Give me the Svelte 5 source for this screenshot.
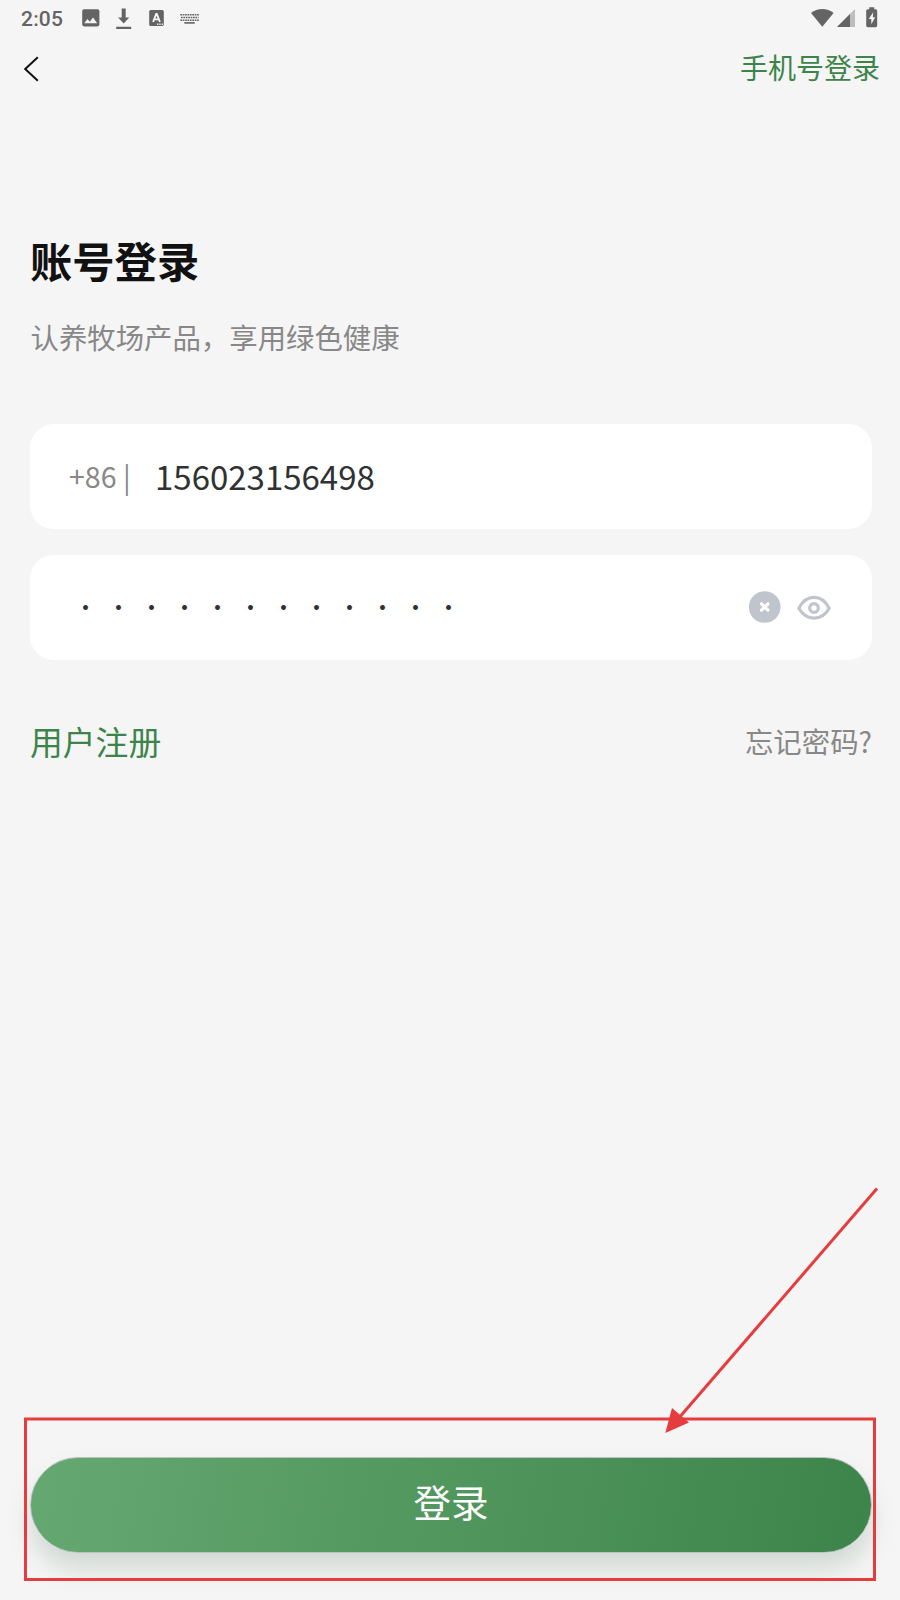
<script>
    let phone = "156023156498";
    let passwordLength = 12;
</script>

<div class="page">
    <!-- Status bar -->
    <div class="status-bar">
        <span class="time">2:05</span>
        <svg class="picture" width="18" height="18" viewBox="0 0 18 18">
            <path fill="#646464" fill-rule="evenodd" d="M2 .2h13.6a1.8 1.8 0 0 1 1.8 1.8v13.6a1.8 1.8 0 0 1-1.8 1.8H2A1.8 1.8 0 0 1 .2 15.600V2A1.8 1.8 0 0 1 2 .2zM2.200 14.200h13L11 8.600l-3.200 4.200-2.300-2.700z" />
        </svg>
        <svg class="download" width="16" height="22" viewBox="0 0 16 22">
            <path fill="#646464" d="M5.700.500h4v9h3.600L7.700 15.500 2.100 9.500h3.600zM.200 18.700h15v2.200H.200z" />
        </svg>
        <svg class="letter" width="16" height="18" viewBox="0 0 16 18">
            <rect x=".2" y="1" width="14.600" height="16" rx="1.600" fill="#646464" />
            <path fill="none" stroke="#f5f5f5" stroke-width="1.900" d="M4.100 13L7.200 5h.6l3.100 8M5.300 10.400h4.400" />
            <path fill="#f5f5f5" d="M8 14.600h1.300v1.300H8zM10.300 14.600h1.300v1.300h-1.300zM12.600 14.600h1.300v1.300h-1.300z" />
        </svg>
        <svg class="keyboard" width="20" height="12" viewBox="0 0 20 12">
            <g fill="none" stroke="#646464" stroke-width="1.600">
                <path d="M.300 1.800H19" stroke-dasharray="1.700 .700" />
                <path d="M1 4.500H18.500" stroke-dasharray="1.700 .700" />
                <path d="M.300 7.200H19" stroke-dasharray="1.700 .700" />
                <path d="M4.300 9.900h10.400" />
            </g>
        </svg>
        <div class="system">
            <svg width="23" height="20" viewBox="0 0 23 20">
                <path fill="#646464" d="M0 5C6.300-.300 16.300-.300 22.600 5L11.300 18.800z" />
            </svg>
            <svg class="signal" width="19" height="20" viewBox="0 0 19 20">
                <path fill="#bdbdbd" d="M18 1v18H0z" />
                <path fill="#646464" d="M13 6v13H0z" />
            </svg>
            <svg class="battery" width="12" height="21" viewBox="0 0 12 21">
                <path fill="#646464" d="M3.200.200h5v2h1.300A1.600 1.600 0 0 1 11.200 3.800v14.700A1.600 1.600 0 0 1 9.600 20.200H1.800A1.600 1.600 0 0 1 .200 18.500V3.800A1.600 1.600 0 0 1 1.800 2.200h1.400z" />
                <path fill="#f5f5f5" d="M7.200 5.200L2.700 12h2.600v5.300L9.200 10.200H6.800z" />
            </svg>
        </div>
    </div>

    <!-- Navigation -->
    <header>
        <button class="back" aria-label="返回">
            <svg width="16" height="26" viewBox="0 0 16 26">
                <path d="M13.800 1.300L1.200 13l12.600 11.700" fill="none" stroke="#111" stroke-width="2" />
            </svg>
        </button>
        <span class="switch">手机号登录</span>
    </header>

    <main>
        <h1>账号登录</h1>
        <p class="slogan">认养牧场产品，享用绿色健康</p>

        <div class="field">
            <span class="prefix">+86 |</span>
            <span class="phone">{phone}</span>
        </div>

        <div class="field">
            <span class="password">{"·".repeat(passwordLength)}</span>
            <div class="actions">
                <svg class="clear" width="32" height="32" viewBox="0 0 32 32">
                    <circle cx="15.700" cy="16" r="15.800" fill="#c0c4cc" />
                    <path d="M12.500 12.800l6.400 6.400M18.900 12.800l-6.400 6.400" stroke="#fff" stroke-width="3.200" stroke-linecap="round" />
                </svg>
                <svg class="eye" width="34" height="26" viewBox="0 0 34 26">
                    <path d="M1.800 13.200C9.500-1.200 24.700-1.200 32.200 13.200 24.700 26.400 9.500 26.400 1.800 13.200z" fill="none" stroke="#c0c4cc" stroke-width="3.200" stroke-linejoin="round" />
                    <circle cx="17" cy="13" r="4.300" fill="none" stroke="#c0c4cc" stroke-width="3.200" />
                </svg>
            </div>
        </div>

        <div class="links">
            <span class="register">用户注册</span>
            <span class="forgot">忘记密码?</span>
        </div>
    </main>

    <footer>
        <button class="submit">登录</button>
    </footer>

    <!-- Highlight around the login button, with its arrow -->
    <svg class="marker" width="900" height="1600" viewBox="0 0 900 1600">
        <rect x="25.500" y="1419" width="849" height="160.500" fill="none" stroke="#e63c3e" stroke-width="3" />
        <path d="M877 1188.500L678 1419" stroke="#e63c3e" stroke-width="3" />
        <path d="M665.300 1433L672 1408l17 14.500z" fill="#e63c3e" />
    </svg>
</div>

<style>
    :global(body) {
        margin: 0;
    }

    .page {
        position: relative;
        display: flex;
        flex-direction: column;
        width: 900px;
        height: 1600px;
        overflow: hidden;
        background: #f5f5f5;
        font-family: "Noto Sans CJK SC", sans-serif;
        color: #303133;
    }

    svg {
        display: block;
        flex: none;
    }

    button {
        border: none;
        padding: 0;
        background: none;
        font-family: inherit;
    }

    .status-bar {
        display: flex;
        align-items: center;
        height: 37px;
        padding: 0 22px 0 21px;
    }

    .time {
        width: 60.5px;
        font-family: Roboto, sans-serif;
        font-size: 21px;
        font-weight: 500;
        letter-spacing: 0.2px;
        color: #646464;
    }

    .picture,
    .letter {
        margin-top: -1px;
    }

    .download {
        margin-left: 16px;
    }

    .letter {
        margin-right: 15px;
        margin-left: 17px;
    }

    .system {
        display: flex;
        align-items: center;
        margin-left: auto;
        margin-top: -2px;
    }

    .signal {
        margin: 0 10px 0 3px;
    }

    header {
        display: flex;
        align-items: center;
        justify-content: space-between;
        height: 64px;
        padding: 0 20px 0 24px;
    }

    .switch {
        font-size: 28px;
        line-height: 40px;
        margin-top: -5px;
        color: #3c8449;
    }

    main {
        padding: 129px 28px 0 30px;
    }

    h1 {
        margin: 0;
        font-size: 42.3px;
        font-weight: 700;
        line-height: 60px;
        color: #111;
    }

    .slogan {
        margin: 26px 0 67px;
        padding-left: 0.5px;
        font-size: 28.4px;
        line-height: 41px;
        color: #888;
    }

    .field {
        display: flex;
        align-items: center;
        box-sizing: border-box;
        height: 105px;
        margin-bottom: 26px;
        padding: 0 41px 0 39px;
        border-radius: 24px;
        background: #fff;
    }

    .prefix {
        width: 86px;
        padding-bottom: 2px;
        font-size: 28.6px;
        white-space: nowrap;
        color: #888;
    }

    .phone {
        padding-bottom: 2px;
        font-size: 33px;
    }

    .password {
        padding-bottom: 3px;
        padding-left: 5px;
        font-size: 23px;
        letter-spacing: 10px;
    }

    .actions {
        display: flex;
        align-items: center;
        gap: 16px;
        margin-left: auto;
    }

    .clear {
        margin-top: -2px;
    }

    .links {
        display: flex;
        align-items: center;
        justify-content: space-between;
        margin-top: 57px;
        line-height: 48px;
    }

    .register {
        font-size: 32.8px;
        color: #3c8449;
    }

    .forgot {
        font-size: 28.4px;
        color: #888;
    }

    footer {
        margin-top: auto;
        padding: 0 28px 47px 30px;
    }

    .submit {
        display: block;
        box-sizing: border-box;
        width: 100%;
        height: 96px;
        padding-bottom: 9px;
        border: 1px solid #bcc3c3;
        border-radius: 48px;
        background: linear-gradient(100deg, #66a872 0%, #3c8449 100%) border-box;
        box-shadow: 0 16px 26px -1px rgba(60, 100, 68, 0.2);
        font-size: 37.6px;
        color: #fff;
    }

    .marker {
        position: absolute;
        top: 0;
        left: 0;
        pointer-events: none;
    }
</style>
